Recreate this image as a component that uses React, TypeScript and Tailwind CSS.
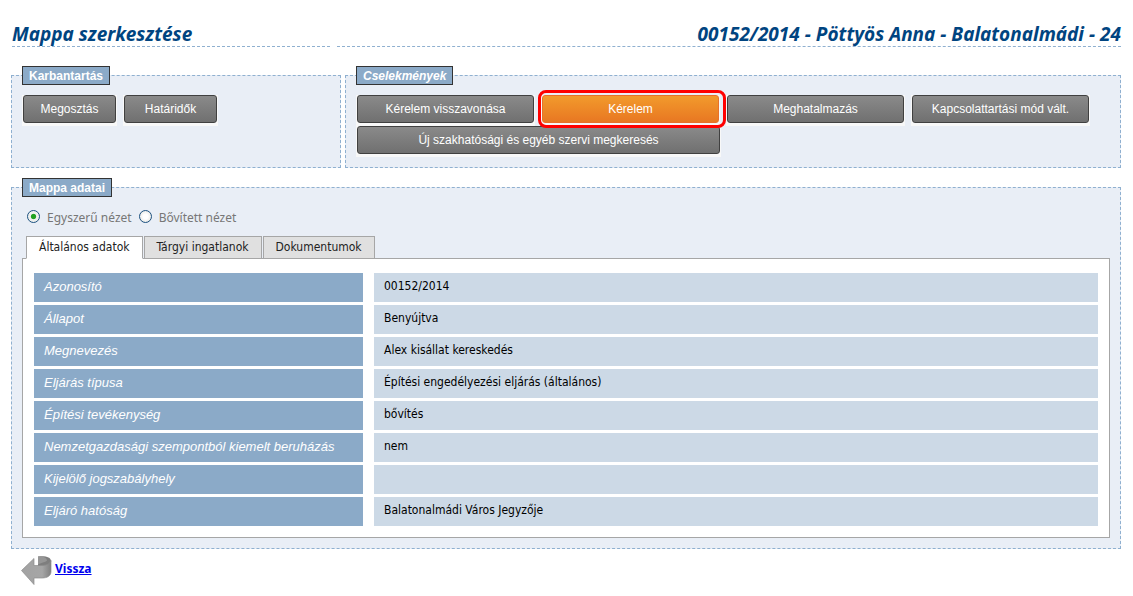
import React, { useState } from 'react';
import clsx from 'clsx';

interface PanelProps {
    title: string;
    italic?: boolean;
    className?: string;
    children: React.ReactNode;
}

interface ActionButtonProps {
    label: string;
    size?: 'small' | 'normal' | 'wide';
    active?: boolean;
}

const TABS = ['Általános adatok', 'Tárgyi ingatlanok', 'Dokumentumok'];

const DETAILS = [
    { label: 'Azonosító', value: '00152/2014' },
    { label: 'Állapot', value: 'Benyújtva' },
    { label: 'Megnevezés', value: 'Alex kisállat kereskedés' },
    { label: 'Eljárás típusa', value: 'Építési engedélyezési eljárás (általános)' },
    { label: 'Építési tevékenység', value: 'bővítés' },
    { label: 'Nemzetgazdasági szempontból kiemelt beruházás', value: 'nem' },
    { label: 'Kijelölő jogszabályhely', value: '' },
    { label: 'Eljáró hatóság', value: 'Balatonalmádi Város Jegyzője' },
];

const Panel: React.FC<PanelProps> = ({ title, italic, className, children }) => (
    <fieldset className={clsx('min-w-0 border border-dashed border-[#8fb0d0] bg-[#e9eef6] px-[10px]', className)}>
        <legend
            className={clsx(
                "h-[19px] border border-[#333] bg-[#8baac8] px-[6px] font-['Liberation_Sans',sans-serif] text-[12px] leading-[18px] font-bold text-white",
                italic && 'italic'
            )}
        >
            {title}
        </legend>
        {children}
    </fieldset>
);

const ActionButton: React.FC<ActionButtonProps> = ({ label, size = 'normal', active }) => (
    <div
        className={clsx(
            'relative bg-[#f8f8f8] px-px pb-[3px]',
            size === 'small' && 'w-[95px]',
            size === 'normal' && 'w-[179px]',
            size === 'wide' && 'w-[365px]'
        )}
    >
        <button
            type="button"
            className={clsx(
                "block h-[28px] w-full rounded-[3px] border font-['Liberation_Sans',sans-serif] text-[12px] leading-[26px] text-white",
                active
                    ? 'border-[#e8702a] bg-linear-to-b from-[#f29a2c] to-[#e87722]'
                    : 'border-[#404040] bg-linear-to-b from-[#8a8a8a] to-[#707070]'
            )}
        >
            {label}
        </button>
        {/* Highlight ring around the current action */}
        {active && (
            <span className="pointer-events-none absolute -top-[5px] -right-[6px] -bottom-[2px] -left-[3px] z-10 rounded-[8px] border-[3px] border-[#ff0000]" />
        )}
    </div>
);

const BackIcon = () => (
    <svg width="31" height="30" viewBox="0 0 31 30" aria-hidden="true">
        <defs>
            <linearGradient id="back-arrow" x1="0" y1="0" x2="1" y2="0">
                <stop offset="0" stopColor="#a2a2a2" />
                <stop offset="0.7" stopColor="#a6a6a6" />
                <stop offset="1" stopColor="#808080" />
            </linearGradient>
        </defs>
        {/* Inner side of the curl, then the arrow itself over it */}
        <path d="M17 0.5 C24 -0.5 30 1 30 5 V10 H17 Z" fill="#7e7e7e" />
        <path d="M17 0.5 C23 0 26 2 26 4.5 C25 6 21 6.5 17 8.5 Z" fill="#969696" />
        <path
            d="M0.5 14.5 L13 2.5 V9.5 H20 C26 9.5 29.5 7.5 30 4.5 V15.5 C30 20 26 22 21 22 H13 V28.5 Z"
            fill="url(#back-arrow)"
            stroke="#8c8c8c"
            strokeWidth="0.7"
        />
    </svg>
);

export default function App() {
    const [view, setView] = useState('simple');
    const [activeTab, setActiveTab] = useState(0);

    const radioClass =
        'mt-[3px] size-[13px] appearance-none rounded-full border border-[#1c5180] bg-[radial-gradient(circle,#fff_30%,#dcdcd7)] checked:bg-[radial-gradient(circle,#21a121_28%,#eef0ee_40%)]';

    return (
        <div className="bg-white pt-[22px] pr-[12px] pl-[11px] font-['Noto_Sans',sans-serif]">
            <header className="flex gap-[7px] pl-px text-[19px] leading-6 font-bold text-[#004480] italic">
                <h1 className="w-[318px] shrink-0 border-b border-dashed border-[#8fb0d0]">Mappa szerkesztése</h1>
                <h2 className="min-w-0 flex-1 border-b border-dashed border-[#8fb0d0] text-right">
                    00152/2014 - Pöttyös Anna - Balatonalmádi - 24
                </h2>
            </header>

            <div className="mt-[19px] flex gap-1">
                <Panel title="Karbantartás" className="w-[330px] shrink-0">
                    <div className="flex flex-wrap gap-x-[6px] pt-[10px]">
                        <ActionButton label="Megosztás" size="small" />
                        <ActionButton label="Határidők" size="small" />
                    </div>
                </Panel>
                <Panel title="Cselekmények" italic className="flex-1">
                    <div className="flex flex-wrap gap-x-[6px] pt-[10px] pb-[10px]">
                        <ActionButton label="Kérelem visszavonása" />
                        <ActionButton label="Kérelem" active />
                        <ActionButton label="Meghatalmazás" />
                        <ActionButton label="Kapcsolattartási mód vált." />
                        <ActionButton label="Új szakhatósági és egyéb szervi megkeresés" size="wide" />
                    </div>
                </Panel>
            </div>

            <Panel title="Mappa adatai" className="mt-[10px] pb-[10px]">
                <div className="flex gap-[7px] pt-[10px] pl-[5px] text-[12px] leading-[22px] text-[#777]">
                    <label className="flex gap-[7px]">
                        <input
                            type="radio"
                            name="view"
                            className={radioClass}
                            checked={view === 'simple'}
                            onChange={() => setView('simple')}
                        />
                        Egyszerű nézet
                    </label>
                    <label className="flex gap-[7px]">
                        <input
                            type="radio"
                            name="view"
                            className={radioClass}
                            checked={view === 'extended'}
                            onChange={() => setView('extended')}
                        />
                        Bővített nézet
                    </label>
                </div>

                <div
                    role="tablist"
                    className="mt-[7px] flex h-[22px] gap-px pl-[4px] font-['DejaVu_Sans_Condensed','DejaVu_Sans',sans-serif]"
                >
                    {TABS.map((tab, i) => (
                        <button
                            key={tab}
                            type="button"
                            role="tab"
                            aria-selected={activeTab === i}
                            onClick={() => setActiveTab(i)}
                            className={clsx(
                                'border border-[#a6a6a6] px-[12px] text-[12px] leading-[21px] text-[#222]',
                                activeTab === i ? 'z-10 h-[23px] border-b-white bg-white' : 'h-[22px] border-b-0 bg-[#e0e0e0]'
                            )}
                        >
                            {tab}
                        </button>
                    ))}
                </div>

                <div className="border border-[#a6a6a6] bg-white pt-[11px] pb-[8px]">
                    <table className="w-full table-fixed border-separate border-spacing-x-[11px] border-spacing-y-[3px] text-left">
                        <colgroup>
                            <col className="w-[329px]" />
                            <col />
                        </colgroup>
                        <tbody>
                            {DETAILS.map(({ label, value }) => (
                                <tr key={label} className="h-[29px]">
                                    <th
                                        scope="row"
                                        className="bg-[#8baac8] px-[10px] pb-[2px] font-['Liberation_Sans',sans-serif] text-[13px] leading-[20px] font-normal text-white italic"
                                    >
                                        {label}
                                    </th>
                                    <td className="bg-[#ccd9e6] px-[10px] pb-[3px] font-['DejaVu_Sans_Condensed','DejaVu_Sans',sans-serif] text-[12px] leading-[20px] text-black">
                                        {value}
                                    </td>
                                </tr>
                            ))}
                        </tbody>
                    </table>
                </div>
            </Panel>

            <a href="#" className="mt-[7px] ml-[10px] inline-flex items-center gap-[3px] text-[12px] leading-4 font-bold text-[#0000ee]">
                <BackIcon />
                <span className="pb-1 underline">Vissza</span>
            </a>
        </div>
    );
}
